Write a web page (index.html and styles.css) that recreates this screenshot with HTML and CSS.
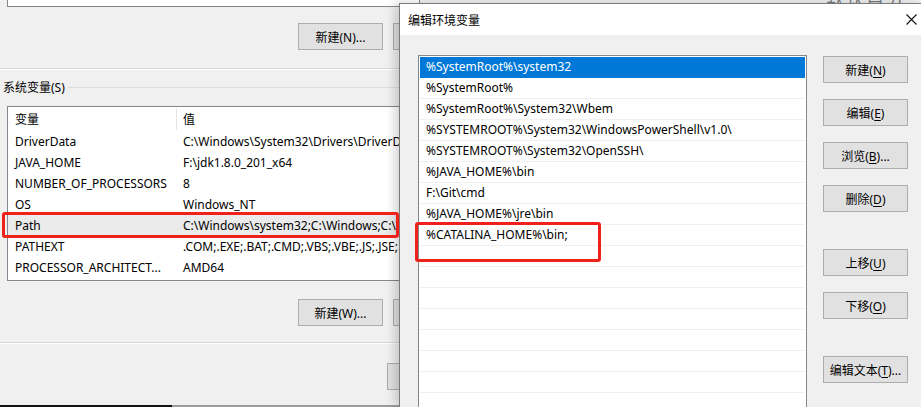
FILE: index.html
```html
<!DOCTYPE html>
<html lang="zh-CN">
<head>
    <meta charset="UTF-8">
    <title>编辑环境变量</title>
    <link rel="stylesheet" href="styles.css">
</head>
<body>
    <div class="sysprops">
        <div class="list-stub"></div>

        <div class="btn-row">
            <button class="win-btn">新建(N)...</button>
            <button class="win-btn">编辑(I)...</button>
        </div>

        <div class="sep"></div>

        <div class="group-label"><span>系统变量(S)</span></div>

        <div class="var-table">
            <div class="var-head">
                <div class="col-name">变量</div>
                <div class="col-value">值</div>
            </div>
            <div class="var-row"><div class="col-name">DriverData</div><div class="col-value">C:\Windows\System32\Drivers\DriverData</div></div>
            <div class="var-row"><div class="col-name">JAVA_HOME</div><div class="col-value">F:\jdk1.8.0_201_x64</div></div>
            <div class="var-row"><div class="col-name">NUMBER_OF_PROCESSORS</div><div class="col-value">8</div></div>
            <div class="var-row"><div class="col-name">OS</div><div class="col-value">Windows_NT</div></div>
            <div class="var-row hover"><div class="col-name">Path</div><div class="col-value">C:\Windows\system32;C:\Windows;C:\Windows\System32\Wbem</div></div>
            <div class="var-row"><div class="col-name">PATHEXT</div><div class="col-value">.COM;.EXE;.BAT;.CMD;.VBS;.VBE;.JS;.JSE;.WSF;.WSH;.MSC</div></div>
            <div class="var-row"><div class="col-name">PROCESSOR_ARCHITECT...</div><div class="col-value">AMD64</div></div>
        </div>

        <div class="btn-row low">
            <button class="win-btn">新建(W)...</button>
            <button class="win-btn">编辑(I)...</button>
        </div>

        <div class="sep sep-low"></div>

        <div class="btn-row ok-row">
            <button class="win-btn">确定</button>
        </div>

        <div class="taskbar-edge"></div>
    </div>

    <div class="bg-title">默认自分</div>

    <div class="dialog">
        <div class="dlg-title">
            <span>编辑环境变量</span>
            <svg class="dlg-close" width="11" height="11" viewBox="0 0 11 11">
                <path d="M0.5 0.5 L10.5 10.5 M10.5 0.5 L0.5 10.5" stroke="#111" stroke-width="1.1" fill="none"/>
            </svg>
        </div>
        <div class="dlg-body">
            <div class="path-list">
                <div class="path-item selected">%SystemRoot%\system32</div>
                <div class="path-item">%SystemRoot%</div>
                <div class="path-item">%SystemRoot%\System32\Wbem</div>
                <div class="path-item">%SYSTEMROOT%\System32\WindowsPowerShell\v1.0\</div>
                <div class="path-item">%SYSTEMROOT%\System32\OpenSSH\</div>
                <div class="path-item">%JAVA_HOME%\bin</div>
                <div class="path-item">F:\Git\cmd</div>
                <div class="path-item">%JAVA_HOME%\jre\bin</div>
                <div class="path-item">%CATALINA_HOME%\bin;</div>
                <div class="path-item"></div>
                <div class="path-item"></div>
                <div class="path-item"></div>
                <div class="path-item"></div>
                <div class="path-item"></div>
                <div class="path-item"></div>
                <div class="path-item"></div>
                <div class="path-item"></div>
            </div>
            <div class="dlg-buttons">
                <button class="win-btn dlg-btn">新建(<u>N</u>)</button>
                <button class="win-btn dlg-btn">编辑(<u>E</u>)</button>
                <button class="win-btn dlg-btn">浏览(<u>B</u>)...</button>
                <button class="win-btn dlg-btn">删除(<u>D</u>)</button>
                <button class="win-btn dlg-btn spaced">上移(<u>U</u>)</button>
                <button class="win-btn dlg-btn">下移(<u>O</u>)</button>
                <button class="win-btn dlg-btn spaced">编辑文本(<u>T</u>)...</button>
            </div>
        </div>
    </div>

    <div class="mark mark-path"></div>
    <div class="mark mark-catalina"></div>
</body>
</html>
```

FILE: styles.css
```css
* {
    box-sizing: border-box;
}

html, body {
    margin: 0;
    height: 100%;
    overflow: hidden;
}

body {
    position: relative;
    background-color: #f0f0f0;
    font-family: "Segoe UI", "Noto Sans", "Noto Sans CJK SC", sans-serif;
    font-size: 12px;
    color: #000;
}

/* background window: system properties */

.sysprops {
    width: 420px;
    height: 407px;
    display: flex;
    flex-direction: column;
    overflow: hidden;
}

.list-stub {
    margin-left: 7px;
    height: 7px;
    background: #fff;
    border: 1px solid #828790;
    border-top: none;
}

.btn-row {
    display: flex;
    gap: 10px;
    margin-top: 16px;
    padding-left: 298px;
}

.btn-row.low {
    margin-top: 18px;
}

.btn-row.ok-row {
    margin-top: 19px;
    padding-left: 387px;
}

.win-btn {
    flex: none;
    width: 85px;
    height: 27px;
    padding: 0;
    background: #e1e1e1;
    border: 1px solid #adadad;
    font: inherit;
    color: #000;
}

.sep {
    margin-top: 18px;
    height: 2px;
    background: #d5d5d5;
    border-bottom: 1px solid #fff;
}

.sep-low {
    margin-top: 16px;
}

.group-label {
    display: flex;
    align-items: center;
    gap: 3px;
    margin-top: 9px;
    padding-left: 3px;
    height: 16px;
}

.group-label::after {
    content: "";
    flex: 1;
    height: 1px;
    background: #dcdcdc;
}

.var-table {
    margin-top: 11px;
    margin-left: 7px;
    height: 175px;
    background: #fff;
    border: 1px solid #828790;
    border-right: none;
    padding-top: 1px;
}

.var-head,
.var-row {
    display: flex;
    align-items: center;
    white-space: nowrap;
}

.var-head {
    height: 22px;
    margin-bottom: 1px;
}

.var-row {
    height: 21px;
}

.var-row.hover {
    background: #ebebeb;
}

.col-name {
    flex: none;
    width: 169px;
    padding-left: 7px;
    overflow: hidden;
}

.col-value {
    flex: none;
    padding-left: 6px;
}

.var-head .col-name {
    height: 100%;
    display: flex;
    align-items: center;
    border-right: 1px solid #e5e5e5;
}

.taskbar-edge {
    margin-top: auto;
    flex: none;
    height: 2px;
    background: linear-gradient(90deg, #111 0 172px, #9a9a9a 172px);
}

.bg-title {
    position: absolute;
    top: -15px;
    left: 826px;
    font-size: 18px;
    color: #7a7a7a;
    letter-spacing: 2px;
}

/* foreground dialog */

.dialog {
    position: absolute;
    left: 399px;
    top: 3px;
    right: 0;
    bottom: 0;
    display: flex;
    flex-direction: column;
    overflow: hidden;
    background: #f0f0f0;
    border: 1px solid #7a7a7a;
    border-right: none;
    border-bottom: none;
    box-shadow: -4px 0 10px rgba(0, 0, 0, 0.18);
}

.dlg-title {
    flex: none;
    height: 31px;
    background: #fff;
    display: flex;
    align-items: center;
    padding-left: 8px;
    position: relative;
}

.dlg-close {
    position: absolute;
    left: 506px;
    top: 10px;
}

.dlg-body {
    display: flex;
    gap: 16px;
    padding: 20px 0 0 18px;
}

.path-list {
    flex: none;
    width: 389px;
    height: 400px;
    background: #fff;
    border: 1px solid #828790;
    padding: 1px;
}

.path-item {
    height: 21px;
    line-height: 20px;
    padding-left: 6px;
    border-bottom: 1px solid #f0f0f0;
    white-space: nowrap;
}

.path-item.selected {
    background: #0078d7;
    color: #fff;
    border-bottom-color: #0078d7;
}

.dlg-buttons {
    display: flex;
    flex-direction: column;
    gap: 16px;
    padding-top: 1px;
}

.dlg-btn.spaced {
    margin-top: 21px;
}

.dlg-btn u {
    text-underline-offset: 2px;
}

/* red annotation boxes */

.mark {
    position: absolute;
    border: 3px solid #f0201a;
    border-radius: 3px;
    z-index: 5;
}

.mark-path {
    left: 2px;
    top: 212px;
    width: 397px;
    height: 26px;
}

.mark-catalina {
    left: 415px;
    top: 222px;
    width: 186px;
    height: 40px;
}
```
